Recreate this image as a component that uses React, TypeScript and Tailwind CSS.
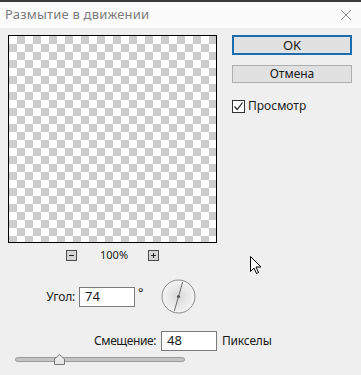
import { useState } from "react";

const font = { fontFamily: '"Noto Sans", "Open Sans", sans-serif' };

function Dial({ angle }: { angle: number }) {
  const r = 15;
  const rad = (angle * Math.PI) / 180;
  const dx = Math.cos(rad) * r;
  const dy = Math.sin(rad) * r;
  return (
    <svg width="35" height="35" viewBox="0 0 35 35">
      <defs>
        <radialGradient id="dialFill" cx="0.5" cy="0.5" r="0.5">
          <stop offset="0" stopColor="#d8d8d8" />
          <stop offset="1" stopColor="#f4f4f4" />
        </radialGradient>
      </defs>
      <circle cx="17.5" cy="17.5" r="16.5" fill="url(#dialFill)" stroke="#8a8a8a" strokeWidth="1" />
      <line x1={17.5 - dx} y1={17.5 + dy} x2={17.5 + dx} y2={17.5 - dy} stroke="#6a6a6a" strokeWidth="1" />
      <circle cx="17.5" cy="17.5" r="1.6" fill="#555" />
    </svg>
  );
}

function ZoomButton({ plus }: { plus?: boolean }) {
  return (
    <div className="w-[11px] h-[11px] border border-[#4a4a4a] bg-[#d6d6d6] flex items-center justify-center relative">
      <div className="w-[5px] h-px bg-[#222]" />
      {plus && <div className="absolute w-px h-[5px] bg-[#222]" />}
    </div>
  );
}

export default function App() {
  const [preview, setPreview] = useState(true);

  return (
    <div className="w-[361px] h-[375px] bg-[#efefef] relative overflow-hidden text-[12px] text-[#1a1a1a]" style={font}>
      {/* Title bar */}
      <div className="h-[28px] border-t-2 border-[#3a3a3a] bg-[#fbfbfb] flex items-center justify-between pl-[5px] pr-[9px]">
        <span className="text-[13px] text-[#7b7b7b] tracking-[0.2px]">Размытие в движении</span>
        <svg width="12" height="12" viewBox="0 0 12 12">
          <path d="M1 1 L11 11 M11 1 L1 11" stroke="#8a8a8a" strokeWidth="1" />
        </svg>
      </div>

      <div className="flex">
        {/* Preview column */}
        <div className="pl-[8px] pt-[7px] flex flex-col">
          <div
            className="w-[209px] h-[208px] border border-black"
            style={{
              backgroundColor: "#ffffff",
              backgroundImage:
                "linear-gradient(45deg, #cdcdcd 25%, transparent 25%, transparent 75%, #cdcdcd 75%), linear-gradient(45deg, #cdcdcd 25%, transparent 25%, transparent 75%, #cdcdcd 75%)",
              backgroundSize: "16px 16px",
              backgroundPosition: "0 0, 8px 8px",
            }}
          />
          <div className="flex items-center h-[24px] pl-[58px]">
            <ZoomButton />
            <span className="ml-[23px] text-[11px] w-[26px] text-center">100%</span>
            <div className="ml-[22px]">
              <ZoomButton plus />
            </div>
          </div>
        </div>

        {/* Buttons column */}
        <div className="ml-[15px] pt-[7px] flex flex-col w-[120px]">
          <button className="h-[20px] border-2 border-[#1a6eb0] bg-[#e1e1e1] text-[13px] leading-none">OK</button>
          <button className="mt-[10px] h-[18px] border border-[#adadad] bg-[#e1e1e1] text-[12px] leading-none">
            Отмена
          </button>
          <label className="mt-[14px] flex items-center gap-[3px] text-[12px]">
            <span
              onClick={() => setPreview(!preview)}
              className="w-[13px] h-[13px] border border-[#333] bg-white flex items-center justify-center"
            >
              {preview && (
                <svg width="11" height="11" viewBox="0 0 11 11">
                  <path d="M1.5 5.5 L4.2 8.5 L9.5 1.5" fill="none" stroke="#222" strokeWidth="1.2" />
                </svg>
              )}
            </span>
            Просмотр
          </label>
        </div>
      </div>

      {/* Angle row */}
      <div className="flex items-center mt-[12px]">
        <span className="w-[75px] text-right tracking-[-0.2px]">Угол:</span>
        <div className="ml-[4px] w-[56px] h-[20px] border border-[#7a7a7a] bg-white pl-[5px] flex items-center text-[13px]">74</div>
        <span className="ml-[3px] self-start mt-[7px] text-[13px] leading-none">°</span>
        <div className="ml-[17px]">
          <Dial angle={74} />
        </div>
      </div>

      {/* Offset row */}
      <div className="flex items-center mt-[17px]">
        <span className="w-[156px] text-right tracking-[-0.4px]">Смещение:</span>
        <div className="ml-[5px] w-[56px] h-[20px] border border-[#7a7a7a] bg-white pl-[5px] flex items-center text-[13px]">48</div>
        <span className="ml-[5px] tracking-[-0.2px]">Пикселы</span>
      </div>

      {/* Slider */}
      <div className="relative ml-[15px] mt-[6px] w-[170px] h-[5px] rounded-full border border-[#9a9a9a] bg-[#c4c4c4]">
        <svg className="absolute left-[38px] top-[-4px]" width="11" height="11" viewBox="0 0 11 11">
          <path d="M0.5 10.5 L0.5 5 L5.5 0.5 L10.5 5 L10.5 10.5 Z" fill="#e8e8e8" stroke="#777" />
        </svg>
      </div>

      {/* Mouse cursor */}
      <svg className="absolute left-[250px] top-[256px]" width="13" height="19" viewBox="0 0 13 19">
        <path d="M0.5 0.5 L0.5 15.5 L4 12 L6.5 17.5 L8.5 16.5 L6 11 L11 11 Z" fill="#fff" stroke="#000" strokeWidth="1" />
      </svg>
    </div>
  );
}
